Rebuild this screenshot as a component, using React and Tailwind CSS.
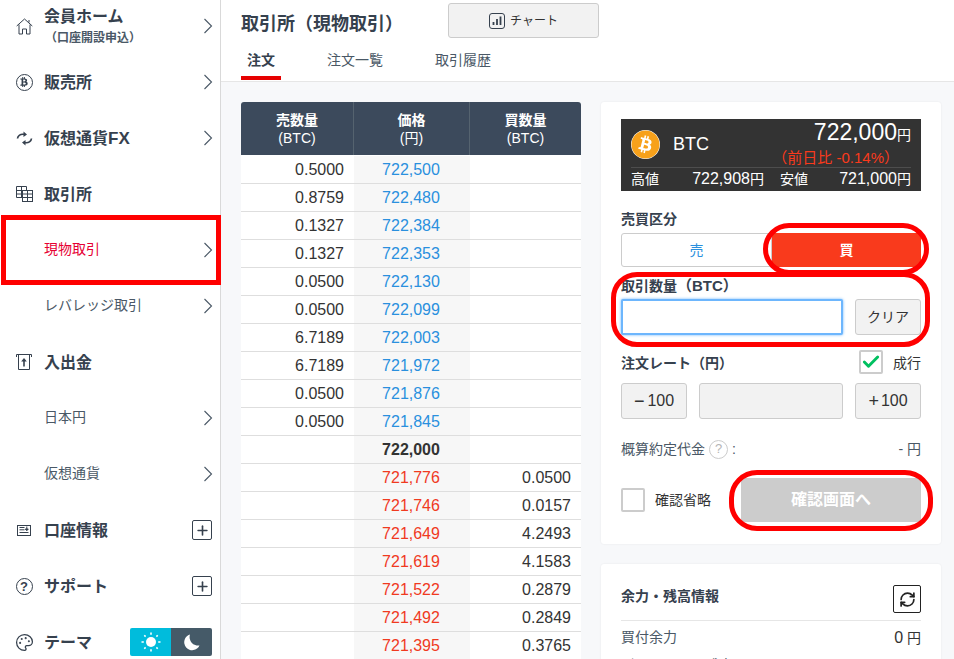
import React from "react";
import { FaBitcoin, FaBtc } from "react-icons/fa";
import { Palette, RefreshCw, Check, Plus } from "lucide-react";

const FONT = '"Liberation Sans","Noto Sans CJK JP",sans-serif';

const Chevron = () => (
  <svg width="10" height="16" viewBox="0 0 10 16" fill="none" stroke="#4a5866" strokeWidth="1.1" className="-mr-[1px]">
    <path d="M1.5 1 L8.5 8 L1.5 15" />
  </svg>
);

const HomeIcon = () => (
  <svg width="17" height="17" viewBox="0 0 17 17" fill="none" stroke="#36414e" strokeWidth="1">
    <path d="M.7 8 L8.5 1 L16.3 8 M3 6.5 V16 H6.5 V11 H10.5 V16 H14 V6.5 M13 2 V4.5" />
  </svg>
);
const BtcIcon = () => (
  <span className="relative flex h-[17px] w-[17px] items-center justify-center rounded-full border border-[#36414e]">
    <FaBtc size={10} color="#36414e" />
  </span>
);
const FxIcon = () => (
  <svg width="17" height="17" viewBox="0 0 17 17" fill="none" stroke="#36414e" strokeWidth="1.7">
    <path d="M1.5 8.5 C1.8 5.6 4.5 3.7 8 4.4" />
    <path d="M15.5 8.5 C15.2 11.4 12.5 13.3 9 12.6" />
    <path d="M7.5 1.5 L11 4.6 L7.5 7 Z M9.5 10 L6 12.5 L9.5 15.5 Z" fill="#36414e" stroke="none" />
  </svg>
);
const TableIcon = () => (
  <svg width="17" height="16" viewBox="0 0 17 16" fill="none" stroke="#36414e" strokeWidth="1">
    <path d="M.5 .5 H10.5 V4 M.5 .5 V11.5 H6.5" />
    <rect x="6.5" y="4.5" width="10" height="11" />
    <path d="M.5 4.5 H6.5 M.5 8 H16.5 M6.5 11.5 H16.5 M5.5 .5 V11.5 M11.5 4.5 V15.5" />
  </svg>
);
const DepositIcon = () => (
  <svg width="16" height="16" viewBox="0 0 16 16" fill="none" stroke="#36414e" strokeWidth="1">
    <path d="M.5 3 V.5 H15.5 V3 M2.5 .5 V15.5 H13.5 V.5" />
    <path d="M8 12.5 V6" strokeWidth="1.6" />
    <path d="M5.2 7.5 L8 4 L10.8 7.5 Z" fill="#36414e" stroke="none" />
  </svg>
);
const InfoIcon = () => (
  <svg width="14" height="11" viewBox="0 0 14 11" fill="none" stroke="#36414e" strokeWidth="1">
    <rect x=".5" y=".5" width="13" height="10" />
    <path d="M2.5 2.5 H7.5 M2.5 4.8 H7.5 M2.5 7.5 H11.5" />
    <path d="M9.8 1.5 V4 M8.3 4 H11.3 L9.8 5.7 Z" fill="#36414e" />
  </svg>
);
const QIcon = () => (
  <span className="flex h-[17px] w-[17px] items-center justify-center rounded-full border-[1.5px] border-[#36414e] text-[13px] font-bold leading-none text-[#36414e]">?</span>
);

const Plusbox = () => (
  <span className="flex h-5 w-5 items-center justify-center rounded-[2px] border border-[#36414e]">
    <Plus size={15} strokeWidth={2.6} color="#36414e" />
  </span>
);

const SunIcon = () => (
  <svg width="20" height="20" viewBox="0 0 20 20" fill="#fff" stroke="#fff" strokeWidth="1.6">
    <circle cx="10" cy="10" r="5" stroke="none" />
    <path d="M10 .5 V2.8 M10 17.2 V19.5 M.5 10 H2.8 M17.2 10 H19.5 M3.3 3.3 L4.6 4.6 M15.4 15.4 L16.7 16.7 M3.3 16.7 L4.6 15.4 M15.4 4.6 L16.7 3.3" />
  </svg>
);
const MoonIcon = () => (
  <svg width="17" height="17" viewBox="0 0 17 17" fill="#fff">
    <path d="M7 .5 A8 8 0 1 0 16.5 11.5 A8.5 8.5 0 0 1 7 .5 Z" />
  </svg>
);

function NavRow({ icon, label, sub, sublabel, color, right }) {
  return (
    <div className="flex h-14 items-center pr-2">
      <div className="flex w-11 shrink-0 justify-center pl-[4px]">{icon}</div>
      <div className="flex-1">
        <div
          className={
            sub
              ? "-mt-[2px] text-[14px] leading-4"
              : "pt-[1px] text-[16px] font-bold leading-5 text-[#36414e]"
          }
          style={sub ? { color: color || "#4a5866" } : undefined}
        >
          {label}
        </div>
        {sublabel && <div className="mt-[3px] pl-[1px] text-[12px] font-bold leading-4 text-[#4a5866]">{sublabel}</div>}
      </div>
      {right}
    </div>
  );
}

const asks = ["0.5000|722,500","0.8759|722,480","0.1327|722,384","0.1327|722,353","0.0500|722,130","0.0500|722,099","6.7189|722,003","6.7189|721,972","0.0500|721,876","0.0500|721,845"];
const bids = ["721,776|0.0500","721,746|0.0157","721,649|4.2493","721,619|4.1583","721,522|0.2879","721,492|0.2849","721,395|0.3765"];

function BookRow({ a, p, b, cls }) {
  return (
    <div className="flex h-7 border-b border-[#dedede] text-[16px] leading-[27px]">
      <div className="w-[113px] pr-[10px] text-right text-[#333]">{a}</div>
      <div className={"w-[116px] bg-[#f7f7f7] pr-[2px] text-center " + cls}>{p}</div>
      <div className="w-[111px] pr-[10px] text-right text-[#333]">{b}</div>
    </div>
  );
}

const Btn = ({ className, children }) => (
  <div className={"flex items-center justify-center rounded-[3px] border border-[#cccccc] bg-[#f2f2f2] text-[#333] " + className}>{children}</div>
);

export default function App() {
  return (
    <div className="relative flex h-[659px] w-[954px] overflow-hidden bg-[#f7f8fa]" style={{ fontFamily: FONT }}>
      <aside className="relative h-full w-[221px] shrink-0 border-r border-[#d9d9d9] bg-white">
        <div className="-mt-[2px]">
          <NavRow icon={<HomeIcon />} label="会員ホーム" sublabel="（口座開設申込）" right={<Chevron />} />
          <NavRow icon={<BtcIcon />} label="販売所" right={<Chevron />} />
          <NavRow icon={<FxIcon />} label={<>仮想通貨<span className="text-[17px]">FX</span></>} right={<Chevron />} />
          <NavRow icon={<TableIcon />} label="取引所" />
          <NavRow sub color="#e60033" label="現物取引" right={<Chevron />} />
          <NavRow sub label="レバレッジ取引" right={<Chevron />} />
          <NavRow icon={<DepositIcon />} label="入出金" />
          <NavRow sub label="日本円" right={<Chevron />} />
          <NavRow sub label="仮想通貨" right={<Chevron />} />
          <NavRow icon={<InfoIcon />} label="口座情報" right={<Plusbox />} />
          <NavRow icon={<QIcon />} label="サポート" right={<Plusbox />} />
          <NavRow
            icon={<Palette size={19} strokeWidth={1.6} color="#36414e" />}
            label="テーマ"
            right={
              <div className="flex h-7 w-[82px] overflow-hidden rounded-[2px]">
                <div className="flex flex-1 items-center justify-center bg-[#00bcdc]">
                  <SunIcon />
                </div>
                <div className="flex flex-1 items-center justify-center bg-[#455a68]">
                  <MoonIcon />
                </div>
              </div>
            }
          />
        </div>
        {/* annotation */}
        <div className="absolute left-[1px] top-[215px] h-[70px] w-[220px] border-[5px] border-[#ff0000]" />
      </aside>

      <main className="min-w-0 flex-1">
        <header className="relative h-[82px] border-b border-[#e6e6e6] bg-white pl-[20px]">
          <div className="flex items-start">
            <h1 className="mt-[13px] w-[207px] text-[18px] font-bold leading-[22px] text-[#36414e]">取引所（現物取引）</h1>
            <Btn className="mt-[3px] h-[35px] w-[151px] gap-[5px] text-[12px] text-[#4a5866]">
              <svg width="16" height="16" viewBox="0 0 16 16" fill="none" stroke="#36414e">
                <rect x=".5" y=".5" width="15" height="15" rx="2.5" />
                <path d="M4.5 12 V9 M8 12 V6 M11.5 12 V3.5" strokeWidth="1.8" />
              </svg>
              <span className="mt-[1px]">チャート</span>
            </Btn>
          </div>
          <nav className="mt-[12px] flex text-[14px] leading-5 text-[#4a5866]">
            <div className="h-[30px] w-10 border-b-4 border-[#e60000] text-center font-bold text-[#36414e]">注文</div>
            <div className="ml-[46px]">注文一覧</div>
            <div className="ml-[52px]">取引履歴</div>
          </nav>
        </header>

        <div className="flex items-start gap-5 pl-5 pt-5">
          <section className="w-[340px] shrink-0">
            <div className="flex h-[53px] overflow-hidden rounded-t-[3px] bg-[#3c4a5c] text-center text-[14px] font-normal leading-[18px] text-white">
              <div className="flex w-[113px] flex-col justify-center border-r border-[#55636f]"><span className="font-bold">売数量</span><span>(BTC)</span></div>
              <div className="flex w-[116px] flex-col justify-center border-r border-[#55636f]"><span className="font-bold">価格</span><span>(円)</span></div>
              <div className="flex w-[111px] flex-col justify-center"><span className="font-bold">買数量</span><span>(BTC)</span></div>
            </div>
            <div className="bg-white pt-[1px]">
              {asks.map((r, i) => {
                const [a, p] = r.split("|");
                return <BookRow key={i} a={a} p={p} cls="text-[#2a90de]" />;
              })}
              <BookRow p={<b>722,000</b>} cls="text-[#333]" />
              {bids.map((r, i) => {
                const [p, b] = r.split("|");
                return <BookRow key={i} p={p} b={b} cls="text-[#f03a1f]" />;
              })}
            </div>
          </section>

          <section className="w-[340px] shrink-0">
            <div className="relative h-[442px] rounded-[3px] bg-white px-5 pt-[17px] shadow-[0_0_2px_rgba(0,0,0,0.08)]">
              <div className="h-[72px] bg-[#333] px-[10px] text-white">
                <div className="flex h-[49px] border-b border-[#4d4d4d]">
                  <FaBitcoin size={29} color="#f7a11b" className="mt-[11px] rounded-full bg-white" />
                  <span className="ml-[13px] mt-[15px] text-[18px] leading-[20px]">BTC</span>
                  <div className="flex-1 text-right">
                    <div className="mt-[1px] leading-[25px]"><span className="text-[23px]">722,000</span><span className="text-[14px]">円</span></div>
                    <div className="pr-[12px] text-[15px] leading-[19px] text-[#f93a1c]">（前日比 -0.14%）</div>
                  </div>
                </div>
                <div className="flex text-[14px] leading-[22px]">
                  <span className="w-[61px]">高値</span>
                  <span className="w-[72px] text-right"><span className="text-[16px]">722,908</span>円</span>
                  <span className="ml-[16px] w-[40px]">安値</span>
                  <span className="flex-1 text-right"><span className="text-[16px]">721,000</span>円</span>
                </div>
              </div>

              <div className="mt-[19px] text-[14px] font-bold leading-[18px] text-[#36414e]">売買区分</div>
              <div className="mt-[5px] flex h-[34px] text-[14px]">
                <div className="flex flex-1 items-center justify-center rounded-l-[3px] border border-[#cccccc] text-[#2a90de]">売</div>
                <div className="flex flex-1 items-center justify-center rounded-r-[3px] bg-[#f93a1c] font-bold text-white">買</div>
              </div>

              <div className="mt-[10px] text-[14px] font-bold leading-[18px] text-[#36414e]">取引数量<span className="text-[15px]">（BTC）</span></div>
              <div className="mt-[4px] flex gap-3">
                <div className="h-9 flex-1 rounded-[2px] border-2 border-[#6db6fd] bg-white shadow-[0_0_3px_#6db6fd]" />
                <Btn className="h-9 w-[66px] text-[14px]">クリア</Btn>
              </div>

              <div className="mt-[15px] flex h-[33px] items-start justify-between">
                <div className="text-[14px] font-bold leading-[27px] text-[#36414e]">注文レート（円）</div>
                <div className="flex items-center gap-[10px] text-[14px] text-[#333]">
                  <span className="flex h-6 w-6 items-center justify-center rounded-[2px] border-2 border-[#cccccc]">
                    <Check size={20} strokeWidth={3.5} color="#00c060" />
                  </span>
                  <span className="mt-[2px]">成行</span>
                </div>
              </div>
              <div className="flex gap-3">
                <Btn className="h-9 w-[66px] text-[16px]"><span className="mr-[3px] text-[18px] leading-none">−</span>100</Btn>
                <div className="h-9 flex-1 rounded-[3px] border border-[#cccccc] bg-[#f2f2f2]" />
                <Btn className="h-9 w-[66px] text-[16px]"><span className="mr-[2px] text-[18px] leading-none">+</span>100</Btn>
              </div>

              <div className="mt-[20px] flex h-5 items-center text-[14px] text-[#4a5866]">
                <span>概算約定代金</span>
                <span className="ml-[4px] flex h-[19px] w-[19px] items-center justify-center rounded-full border border-[#cccccc] text-[13px] text-[#b5b5b5]">?</span>
                <span className="ml-[4px]">:</span>
                <span className="ml-auto">- 円</span>
              </div>

              <div className="mt-[19px] flex items-center">
                <span className="h-6 w-6 rounded-[2px] border-2 border-[#cccccc]" />
                <span className="ml-[10px] text-[14px] text-[#333]">確認省略</span>
                <div className="ml-auto flex h-11 w-[180px] items-center justify-center rounded-[3px] bg-[#cccccc] text-[16px] font-bold text-white">確認画面へ</div>
              </div>

              {/* annotations */}
              <div className="absolute left-[162px] top-[121px] h-[52px] w-[166px] rounded-[26px] border-[5px] border-[#ff0000]" />
              <div className="absolute left-[10px] top-[170px] h-[75px] w-[319px] rounded-[26px] border-[5px] border-[#ff0000]" />
              <div className="absolute left-[128px] top-[368px] h-[61px] w-[204px] rounded-[28px] border-[5px] border-[#ff0000]" />
            </div>

            <div className="mt-5 h-[200px] rounded-[3px] bg-white px-5 shadow-[0_0_2px_rgba(0,0,0,0.08)]">
              <div className="flex h-[57px] items-center justify-between border-b border-[#e6e6e6] pt-[14px]">
                <span className="-mt-[6px] text-[14px] font-bold text-[#36414e]">余力・残高情報</span>
                <span className="flex h-7 w-7 items-center justify-center rounded-[2px] border border-[#222]">
                  <RefreshCw size={17} strokeWidth={2.4} color="#222" />
                </span>
              </div>
              <div className="flex h-[33px] items-center justify-between text-[14px] text-[#4a5866]">
                <span>買付余力</span>
                <span className="text-[#333]"><span className="text-[16px]">0</span> 円</span>
              </div>
              <div className="mt-[1px] text-[14px] leading-5 text-[#4a5866]">ビットコイン残高</div>
            </div>
          </section>
        </div>
      </main>
    </div>
  );
}
